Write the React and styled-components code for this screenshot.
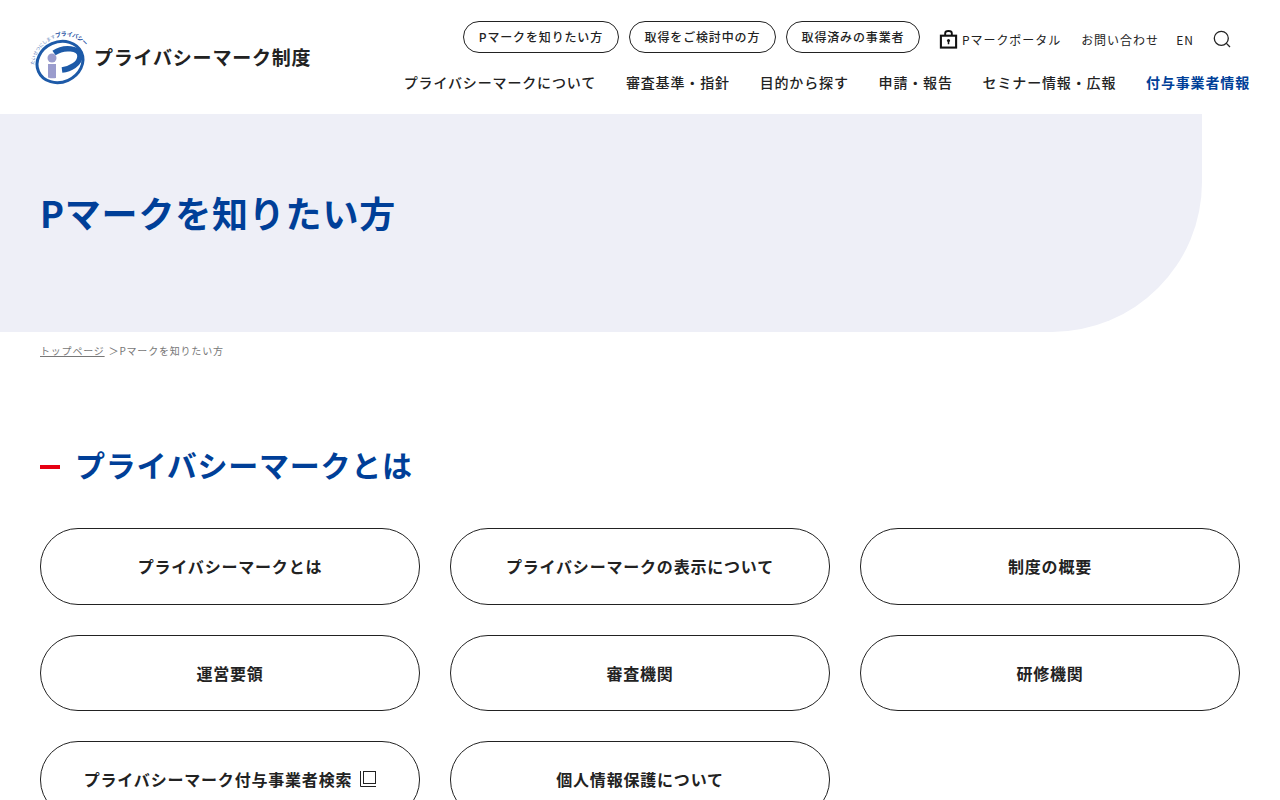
import React from "react";
import styled, { createGlobalStyle } from "styled-components";

const GlobalStyle = createGlobalStyle`
  html, body {
    margin: 0;
    padding: 0;
    background: #fff;
    font-family: "Noto Sans CJK JP", "Noto Sans", sans-serif;
    color: #222;
  }
  body { height: 800px; overflow: hidden; }
  * { box-sizing: border-box; }
`;

const blue = "#003f98";

const Header = styled.header`
  height: 114px;
  display: flex;
  justify-content: space-between;
  padding: 21px 30px 0 30px;
`;
const Brand = styled.a`
  display: flex;
  align-items: center;
  gap: 4px;
  height: 60px;
  margin-top: 6px;
  font-size: 19px;
  font-weight: 700;
  color: #222;
`;
const BrandName = styled.span`
  margin-bottom: 2px;
  letter-spacing: 0.8px;
`;
const HeaderRight = styled.div`
  display: flex;
  flex-direction: column;
  align-items: flex-end;
`;
const TopRow = styled.div`
  display: flex;
  align-items: center;
  height: 32px;
  margin-right: 19px;
`;
const Pills = styled.div`
  display: flex;
  gap: 10px;
  margin-right: 19px;
`;
const Pill = styled.a`
  width: ${(p) => p.$w}px;
  height: 32px;
  border: 1px solid #222;
  border-radius: 16px;
  display: flex;
  align-items: center;
  justify-content: center;
  padding-bottom: 2px;
  font-size: 12px;
  font-weight: 500;
  letter-spacing: 0.85px;
`;
const TopLink = styled.a`
  display: flex;
  align-items: center;
  gap: 4px;
  margin-left: ${(p) => p.$ml || 0}px;
  font-size: 12px;
  letter-spacing: 0.95px;
  padding-top: 4px;
`;
const SearchButton = styled.button`
  border: 0;
  background: none;
  padding: 0;
  margin-left: 19px;
  margin-top: 4px;
  display: flex;
`;
const Nav = styled.nav`
  display: flex;
  gap: 29.8px;
  margin-top: 20px;
`;
const NavItem = styled.a`
  font-size: 14px;
  font-weight: ${(p) => (p.$active ? 700 : 500)};
  letter-spacing: 0.85px;
  line-height: 19px;
  color: ${(p) => (p.$active ? blue : "#222")};
  white-space: nowrap;
`;
const Hero = styled.section`
  width: 1202px;
  height: 218px;
  background: #eeeff7;
  border-bottom-right-radius: 150px;
  display: flex;
  align-items: center;
  padding: 0 0 22px 40px;
`;
const HeroTitle = styled.h1`
  margin: 0;
  font-size: 36px;
  font-weight: 700;
  color: ${blue};
  letter-spacing: 0.8px;
`;
const Crumbs = styled.div`
  display: flex;
  gap: 4px;
  padding: 11px 0 0 40px;
  font-size: 10px;
  line-height: 15px;
  color: #777;
  letter-spacing: 0.8px;
`;
const CrumbLink = styled.a`
  text-decoration: underline;
`;
const Main = styled.main`
  padding: 0 40px;
`;
const SectionTitle = styled.h2`
  margin: 82px 0 0;
  display: flex;
  align-items: center;
  gap: 15px;
  height: 48px;
  font-size: 30px;
  font-weight: 700;
  color: ${blue};
  letter-spacing: 0.75px;
  &::before {
    content: "";
    width: 20px;
    height: 4px;
    margin-top: 6px;
    background: #e60012;
  }
`;
const LinkGrid = styled.div`
  display: grid;
  grid-template-columns: repeat(3, 380px);
  column-gap: 30px;
  row-gap: 30px;
  margin-top: 40px;
`;
const LinkCard = styled.a`
  height: 76.5px;
  border: 1px solid #222;
  border-radius: 38px;
  display: flex;
  align-items: center;
  justify-content: center;
  gap: 8px;
  font-size: 16px;
  font-weight: 700;
  letter-spacing: 0.8px;
`;

const Logo = () => (
  <svg width="60" height="60" viewBox="0 0 60 60" fill="none">
    <defs>
      <path id="logoArc" d="M4 38C5 22 19 10 35 9c9 0 19 5 24 17" />
    </defs>
    <ellipse cx="30" cy="35" rx="23.5" ry="20" transform="rotate(-24 30 35)" stroke="#1d5aa8" strokeWidth="3" fill="#fff" />
    <path d="M24 26C34 19 50 21 50 29C50 37 40 42 32 43" stroke="#1d5aa8" strokeWidth="5.5" fill="none" />
    <circle cx="22" cy="31" r="4.5" fill="#9a9ccd" />
    <path d="M18 37h8v14c-3 .6-5 .4-8-.6z" fill="#9a9ccd" />
    <text fontSize="4.6" fontWeight="400" fill="#5d7db8">
      <textPath href="#logoArc">
        たいせつにします
        <tspan fontSize="5.8" fontWeight="700" letterSpacing="-0.4" fill="#1d4f9f">プライバシー</tspan>
      </textPath>
    </text>
  </svg>
);

const LockIcon = () => (
  <svg width="19" height="19" viewBox="0 0 20 20" fill="none">
    <path d="M6.5 6V3.5C6.5 2 7.5 1 10 1s3.5 1 3.5 2.5V6" stroke="#111" strokeWidth="2" />
    <rect x="2" y="6" width="16" height="12.5" stroke="#111" strokeWidth="2.2" />
    <circle cx="10" cy="11" r="1.6" fill="#111" />
    <rect x="9.2" y="11" width="1.6" height="4" fill="#111" />
  </svg>
);

const SearchIcon = () => (
  <svg width="18" height="18" viewBox="0 0 18 18" fill="none">
    <circle cx="8.3" cy="8.3" r="7" stroke="#222" strokeWidth="1.3" />
    <path d="M13.4 13.4L17 17" stroke="#222" strokeWidth="1.3" />
  </svg>
);

const ExternalIcon = () => (
  <svg width="16" height="16" viewBox="0 0 16 16" fill="none">
    <path d="M.5 0v15.5H16" stroke="#222" />
    <rect x="3.5" y=".5" width="12" height="12" stroke="#222" />
  </svg>
);

const pills = [
  ["Pマークを知りたい方", 156],
  ["取得をご検討中の方", 147],
  ["取得済みの事業者", 134],
];
const navItems = ["プライバシーマークについて", "審査基準・指針", "目的から探す", "申請・報告", "セミナー情報・広報"];
const links = [
  "プライバシーマークとは",
  "プライバシーマークの表示について",
  "制度の概要",
  "運営要領",
  "審査機関",
  "研修機関",
  "プライバシーマーク付与事業者検索",
  "個人情報保護について",
];

export default function App() {
  return (
    <>
      <GlobalStyle />
      <Header>
        <Brand>
          <Logo />
          <BrandName>プライバシーマーク制度</BrandName>
        </Brand>
        <HeaderRight>
          <TopRow>
            <Pills>
              {pills.map(([label, w]) => (
                <Pill key={label} $w={w}>{label}</Pill>
              ))}
            </Pills>
            <TopLink><LockIcon />Pマークポータル</TopLink>
            <TopLink $ml={20}>お問い合わせ</TopLink>
            <TopLink $ml={17.5}>EN</TopLink>
            <SearchButton><SearchIcon /></SearchButton>
          </TopRow>
          <Nav>
            {navItems.map((n) => (
              <NavItem key={n}>{n}</NavItem>
            ))}
            <NavItem $active>付与事業者情報</NavItem>
          </Nav>
        </HeaderRight>
      </Header>
      <Hero>
        <HeroTitle>Pマークを知りたい方</HeroTitle>
      </Hero>
      <Crumbs>
        <CrumbLink>トップページ</CrumbLink>
        <span>＞Pマークを知りたい方</span>
      </Crumbs>
      <Main>
        <SectionTitle>プライバシーマークとは</SectionTitle>
        <LinkGrid>
          {links.map((l, i) => (
            <LinkCard key={l}>
              {l}
              {i === 6 && <ExternalIcon />}
            </LinkCard>
          ))}
        </LinkGrid>
      </Main>
    </>
  );
}
